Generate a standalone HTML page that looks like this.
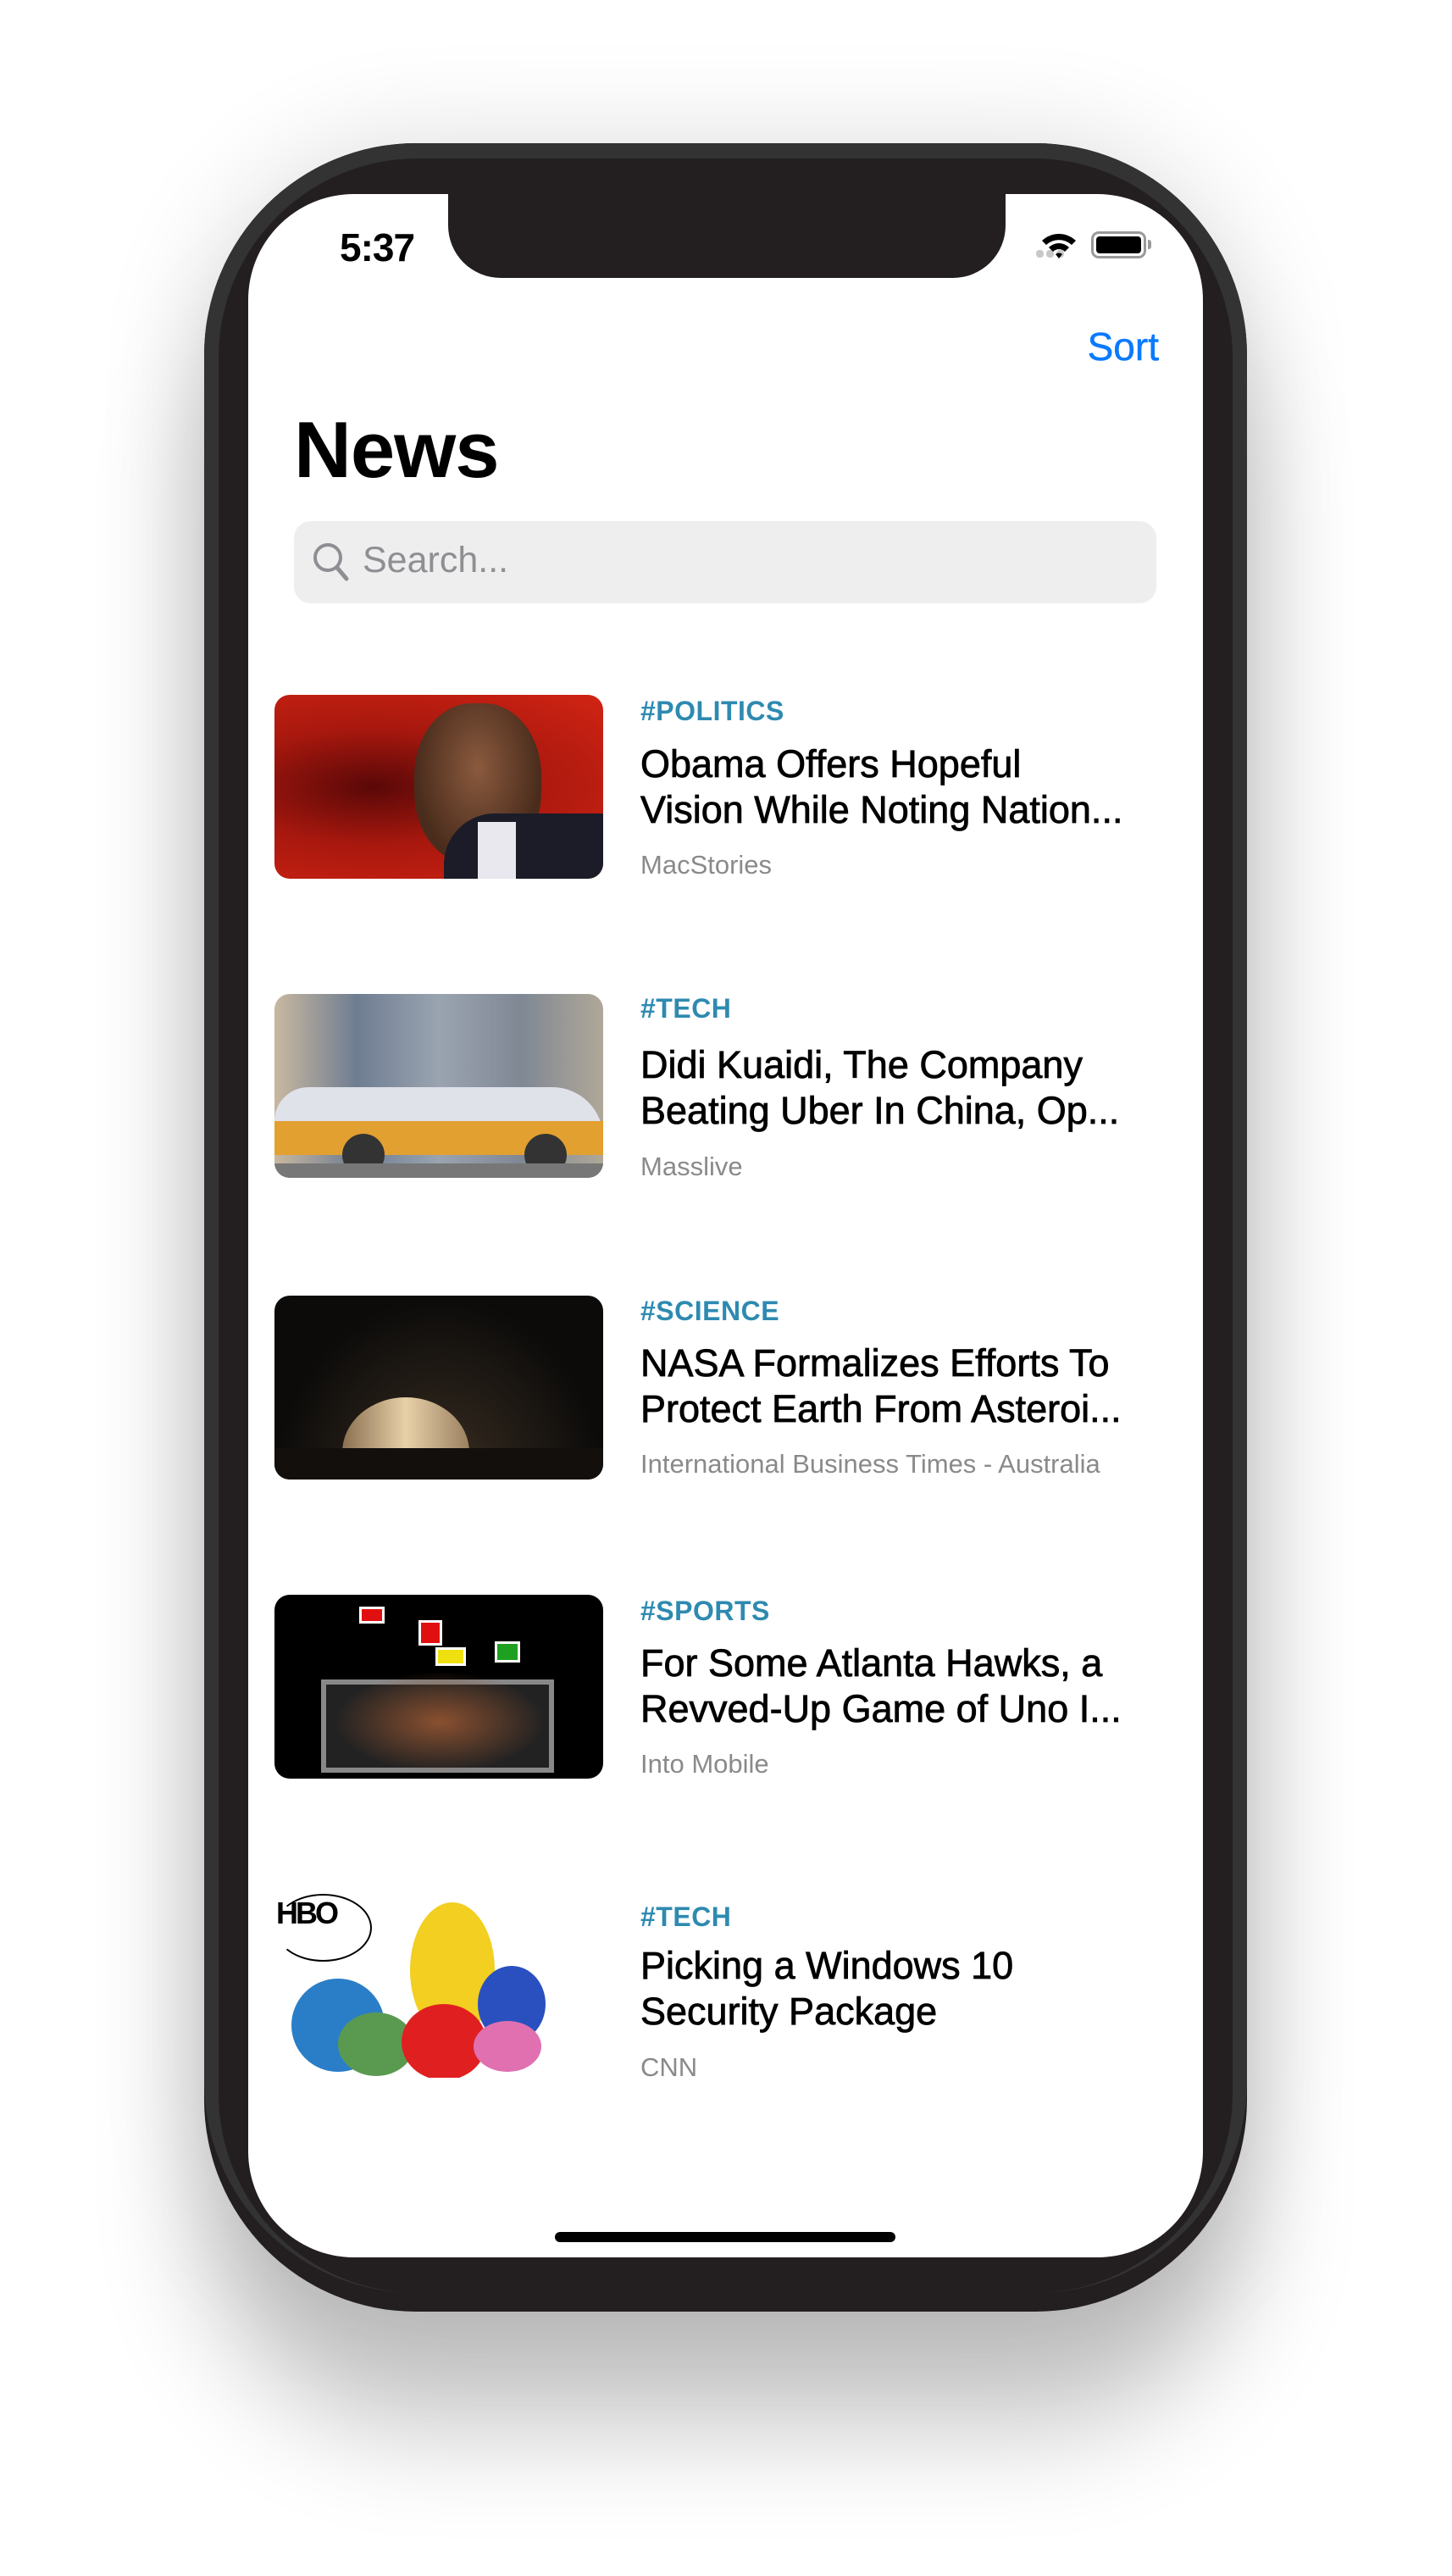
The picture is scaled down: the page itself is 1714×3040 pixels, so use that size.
<!DOCTYPE html>
<html><head><meta charset="utf-8">
<style>
*{margin:0;padding:0;box-sizing:border-box}
body{width:1714px;height:3040px;background:#fff;position:relative;overflow:hidden;font-family:"Liberation Sans",sans-serif}
.outer{position:absolute;left:241px;top:169px;width:1231px;height:2559px;border-radius:250px;background:#231f20;box-shadow:0 0 130px rgba(0,0,0,.14),0 140px 220px rgba(0,0,0,.22)}
.mid{position:absolute;left:241px;top:169px;width:1231px;height:2537px;border-radius:250px;background:#333}
.inner{position:absolute;left:258px;top:187px;width:1197px;height:2519px;border-radius:235px;background:#231f20}
.screen{position:absolute;left:293px;top:229px;width:1127px;height:2435px;border-radius:125px;background:#fff;overflow:hidden}
.notch{position:absolute;left:236px;top:-10px;width:658px;height:109px;background:#231f20;border-radius:0 0 62px 62px}
.abs{position:absolute}
.time{left:108px;top:36px;font-size:46px;font-weight:bold;letter-spacing:-1px}
.sort{right:52px;top:153px;font-size:46px;color:#0a7aff;-webkit-text-stroke:0.5px #0a7aff}
.title{left:54px;top:248px;font-size:94px;font-weight:bold;letter-spacing:-1px}
.search{left:54px;top:386px;width:1018px;height:97px;border-radius:20px;background:#eeeeef}
.search span{position:absolute;left:81px;top:22px;font-size:43px;color:#8e8e93}
.img{position:absolute;left:31px;width:388px;height:217px;border-radius:18px;overflow:hidden}
.tag{position:absolute;left:463px;font-size:32px;font-weight:bold;color:#2e8ab0;letter-spacing:.5px}
.hd{position:absolute;left:463px;font-size:45px;line-height:54px;color:#000;white-space:nowrap;-webkit-text-stroke:0.8px #000}
.src{position:absolute;left:463px;font-size:31px;color:#8a8a8a}
.home{left:362px;top:2405px;width:402px;height:12px;border-radius:6px;background:#000}
</style></head><body>
<div class="outer"></div><div class="mid"></div><div class="inner"></div>
<div class="screen">
 <div class="notch"></div>
 <div class="abs time">5:37</div>
 <div class="abs" style="left:930px;top:66px;width:40px;height:10px">
  <span style="position:absolute;left:0;top:0;width:9px;height:9px;border-radius:4px;background:#c8c8c8"></span>
  <span style="position:absolute;left:12px;top:0;width:9px;height:9px;border-radius:4px;background:#c8c8c8"></span>
  <span style="position:absolute;left:24px;top:0;width:9px;height:9px;border-radius:4px;background:#c8c8c8"></span>
 </div>
 <svg class="abs" style="left:935px;top:44px" width="44" height="34" viewBox="0 0 44 34"><path d="M2 11 A29 29 0 0 1 42 11 L37 16 A22 22 0 0 0 7 16Z M10 19 A17 17 0 0 1 34 19 L29 24 A10 10 0 0 0 15 24Z M18 27 A6 6 0 0 1 26 27 L22 32Z" fill="#000"/></svg>
 <div class="abs" style="left:995px;top:44px;width:65px;height:32px;border:3px solid #999;border-radius:9px;padding:3px"><div style="width:100%;height:100%;background:#000;border-radius:4px"></div></div>
 <div class="abs" style="left:1062px;top:54px;width:4px;height:11px;background:#999;border-radius:0 3px 3px 0"></div>
 <div class="abs sort">Sort</div>
 <div class="abs title">News</div>
 <div class="abs search">
  <svg style="position:absolute;left:22px;top:24px" width="46" height="50" viewBox="0 0 46 50"><circle cx="18" cy="19" r="15" stroke="#8e8e93" stroke-width="4" fill="none"/><path d="M29 31 L40 44" stroke="#8e8e93" stroke-width="5" stroke-linecap="round"/></svg>
  <span>Search...</span>
 </div>

 <div class="img" style="top:591px;background:radial-gradient(ellipse at 30% 50%,#5a0808 0%,#a8180e 45%,#d22414 100%)">
  <div style="position:absolute;left:165px;top:10px;width:150px;height:190px;border-radius:45%;background:radial-gradient(ellipse at 50% 40%,#8a5a3e,#4a2c1c 70%)"></div>
  <div style="position:absolute;left:200px;top:140px;width:200px;height:100px;background:#1b1c28;border-radius:60px 0 0 0"></div>
  <div style="position:absolute;left:240px;top:150px;width:45px;height:80px;background:#e8e8ee"></div>
 </div>
 <div class="tag" style="top:592px">#POLITICS</div>
 <div class="hd" style="top:646px">Obama Offers Hopeful<br>Vision While Noting Nation...</div>
 <div class="src" style="top:774px">MacStories</div>

 <div class="img" style="top:944px;background:linear-gradient(90deg,#c8b8a0,#6f7d92 25%,#9aa4b0 50%,#7f8894 75%,#b0a898)">
  <div style="position:absolute;left:0;top:110px;width:388px;height:80px;background:#e0e2ea;border-radius:40px 60px 10px 10px"></div>
  <div style="position:absolute;left:0;top:150px;width:388px;height:40px;background:#e2a030"></div>
  <div style="position:absolute;left:80px;top:165px;width:50px;height:50px;border-radius:50%;background:#333"></div>
  <div style="position:absolute;left:295px;top:165px;width:50px;height:50px;border-radius:50%;background:#333"></div>
  <div style="position:absolute;left:0;top:200px;width:388px;height:20px;background:#777"></div>
 </div>
 <div class="tag" style="top:943px">#TECH</div>
 <div class="hd" style="top:1001px">Didi Kuaidi, The Company<br>Beating Uber In China, Op...</div>
 <div class="src" style="top:1130px">Masslive</div>

 <div class="img" style="top:1300px;background:radial-gradient(ellipse at 50% 100%,#3a2e22,#0c0b0a 70%)">
  <div style="position:absolute;left:80px;top:120px;width:150px;height:130px;border-radius:50%;background:linear-gradient(90deg,#8a7050,#e8d0a8,#9a8060)"></div>
  <div style="position:absolute;left:0;top:180px;width:388px;height:40px;background:#120f0c"></div>
 </div>
 <div class="tag" style="top:1300px">#SCIENCE</div>
 <div class="hd" style="top:1353px">NASA Formalizes Efforts To<br>Protect Earth From Asteroi...</div>
 <div class="src" style="top:1481px">International Business Times - Australia</div>

 <div class="img" style="top:1653px;background:#000">
  <div style="position:absolute;left:55px;top:100px;width:275px;height:110px;border:6px solid #888;background:#222"></div>
  <div style="position:absolute;left:100px;top:14px;width:30px;height:20px;background:#e01010;border:3px solid #fff"></div>
  <div style="position:absolute;left:170px;top:30px;width:28px;height:30px;background:#e01010;border:3px solid #fff"></div>
  <div style="position:absolute;left:190px;top:62px;width:36px;height:22px;background:#f0e010;border:3px solid #fff"></div>
  <div style="position:absolute;left:260px;top:55px;width:30px;height:25px;background:#20a020;border:3px solid #fff"></div>
  <div style="position:absolute;left:70px;top:90px;width:250px;height:120px;background:radial-gradient(ellipse,#8a5030,transparent 70%)"></div>
 </div>
 <div class="tag" style="top:1654px">#SPORTS</div>
 <div class="hd" style="top:1707px">For Some Atlanta Hawks, a<br>Revved-Up Game of Uno I...</div>
 <div class="src" style="top:1835px">Into Mobile</div>

 <div class="img" style="top:2006px;background:#fff">
  <div style="position:absolute;left:2px;top:2px;width:115px;height:40px;font:900 36px 'Liberation Sans',sans-serif;letter-spacing:-3px">HBO</div>
  <div style="position:absolute;left:0;top:0;width:115px;height:80px;border:2px solid #000;border-radius:50%;border-left-color:transparent"></div>
  <div style="position:absolute;left:160px;top:10px;width:100px;height:160px;border-radius:50%;background:#f2cf20"></div>
  <div style="position:absolute;left:20px;top:100px;width:110px;height:110px;border-radius:50%;background:#2a7ec8"></div>
  <div style="position:absolute;left:75px;top:140px;width:90px;height:75px;border-radius:50%;background:#5a9a50"></div>
  <div style="position:absolute;left:150px;top:130px;width:100px;height:90px;border-radius:50%;background:#e02020"></div>
  <div style="position:absolute;left:240px;top:85px;width:80px;height:90px;border-radius:50%;background:#2a50c0"></div>
  <div style="position:absolute;left:235px;top:150px;width:80px;height:60px;border-radius:50%;background:#e070b0"></div>
 </div>
 <div class="tag" style="top:2015px">#TECH</div>
 <div class="hd" style="top:2064px">Picking a Windows 10<br>Security Package</div>
 <div class="src" style="top:2193px">CNN</div>

 <div class="abs home"></div>
</div>
</body></html>
